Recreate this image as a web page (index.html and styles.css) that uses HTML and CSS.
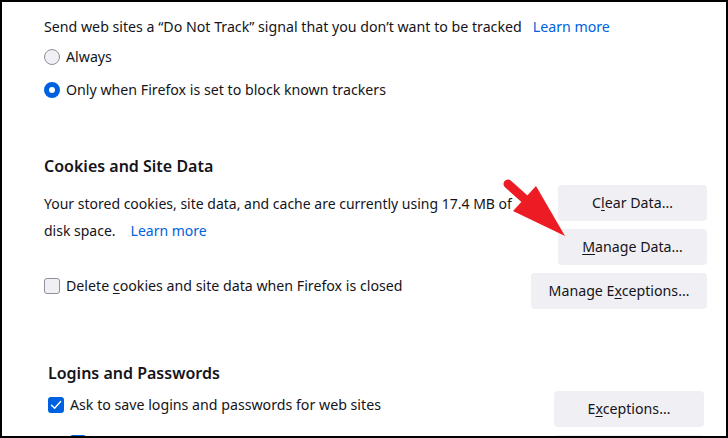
FILE: index.html
```html
<!DOCTYPE html>
<html>
<head>
<meta charset="utf-8">
<link rel="stylesheet" href="styles.css">
</head>
<body>
<div class="frame">
  <section class="dnt">
    <div class="lead"><span>Send web sites a “Do Not Track” signal that you don’t want to be tracked</span><a class="link lead-link">Learn more</a></div>
    <div class="opt opt-first"><span class="radio"></span><span>Always</span></div>
    <div class="opt opt-second"><span class="radio on"></span><span>Only when Firefox is set to block known trackers</span></div>
  </section>

  <section class="cookies">
    <h2 class="heading">Cookies and Site Data</h2>
    <div class="cookie-top">
      <div class="desc">
        <div class="desc-line">Your stored cookies, site data, and cache are currently using 17.4 MB of</div>
        <div class="desc-line"><span>disk space.</span><a class="link desc-link">Learn more</a></div>
      </div>
      <div class="btn-col">
        <button class="btn btn-sm">C<u>l</u>ear Data…</button>
        <button class="btn btn-sm"><u>M</u>anage Data…</button>
      </div>
    </div>
    <div class="cookie-bottom">
      <div class="opt opt-inline"><span class="check"></span><span>Delete <u>c</u>ookies and site data when Firefox is closed</span></div>
      <button class="btn btn-wide">Manage E<u>x</u>ceptions…</button>
    </div>
  </section>

  <section class="logins">
    <h2 class="heading">Logins and Passwords</h2>
    <div class="login-row">
      <div class="opt opt-login"><span class="check on"><svg viewBox="0 0 16 16" width="16" height="16"><path d="M3.5 8.2 L6.6 11.2 L12.6 4.6" fill="none" stroke="#fff" stroke-width="1.5" stroke-linecap="round" stroke-linejoin="round"/></svg></span><span>Ask to save logins and passwords for web sites</span></div>
      <button class="btn btn-exc">E<u>x</u>ceptions…</button>
    </div>
    <div class="login-row login-row-sub">
      <span class="check on"></span>
      <span class="btn btn-exc btn-ghost"></span>
    </div>
  </section>

  <svg class="arrow" width="728" height="438" viewBox="0 0 728 438">
    <line x1="508" y1="184" x2="527" y2="201" stroke="#ed1c24" stroke-width="9" stroke-linecap="round"/>
    <polygon points="536,186 513,211 565,236" fill="#ed1c24"/>
  </svg>
</div>
</body>
</html>
```

FILE: styles.css
```css
* { box-sizing: border-box; }
html, body { margin: 0; padding: 0; background: #fff; }
body {
  font-family: "Noto Sans", "Open Sans", sans-serif;
  font-size: 14.2px;
  color: #15141a;
}
.frame {
  position: relative;
  width: 728px;
  height: 438px;
  border: 2px solid #000;
  overflow: hidden;
  background: #fff;
}
p { margin: 0; }
u { text-decoration: underline; text-underline-offset: 2px; }

.link { color: #0061e0; text-decoration: none; }

.dnt { padding: 15px 19px 0 42px; }
.lead { display: flex; line-height: 20px; white-space: nowrap; }
.lead-link { margin-left: 11px; }

.opt {
  display: flex;
  align-items: center;
  line-height: 20px;
  gap: 6px;
}
.opt-first { margin-top: 10px; }
.opt-second { margin-top: 13px; }

.radio {
  width: 16px; height: 16px;
  border-radius: 50%;
  border: 1px solid #8f8f9d;
  background: #f0f0f4;
  flex: none;
}
.radio.on {
  border: 5px solid #0061e0;
  background: #fff;
}
.check {
  width: 16px; height: 16px;
  border-radius: 3px;
  border: 1px solid #8f8f9d;
  background: #f0f0f4;
  flex: none;
  display: flex;
}
.check.on {
  border: none;
  background: #0061e0;
}

.heading {
  margin: 0;
  font-size: 16px;
  font-weight: 600;
  line-height: 24px;
}

.cookies { padding: 54px 19px 0 42px; }
.cookie-top {
  display: flex;
  justify-content: space-between;
  align-items: flex-start;
  margin-top: 7px;
}
.desc { width: 480px; font-size: 14px; line-height: 27px; margin-top: 5px; }
.desc-line { display: flex; white-space: nowrap; }
.desc-link { margin-left: 15px; }
.btn-col { display: flex; flex-direction: column; gap: 8px; }

.btn {
  font-family: inherit;
  font-size: 14.2px;
  color: #15141a;
  background: #f0f0f4;
  border: none;
  border-radius: 4px;
  height: 36px;
  padding: 0 16px;
  line-height: 20px;
}
.btn-sm { width: 149px; }
.btn-wide { width: 176px; }
.btn-exc { width: 150px; }
.btn-ghost { display: block; }

.cookie-bottom {
  display: flex;
  justify-content: space-between;
  align-items: flex-start;
  margin-top: 8px;
}
.opt-inline { margin-top: 3px; }

.logins { padding: 52px 22px 0 46px; }
.login-row {
  display: flex;
  justify-content: space-between;
  align-items: flex-start;
  margin-top: 6px;
}
.opt-login { margin-top: 4px; }
.login-row-sub { margin-top: 8px; padding-left: 22px; }

.arrow {
  position: absolute;
  left: -2px; top: -2px;
  pointer-events: none;
}
```
